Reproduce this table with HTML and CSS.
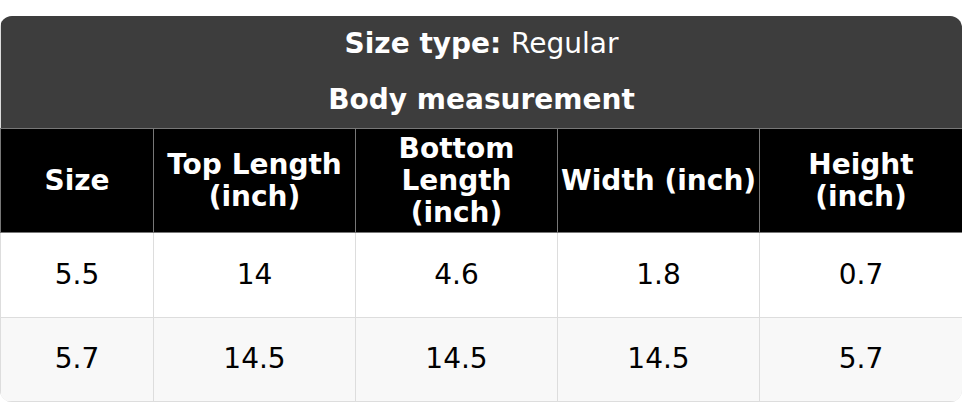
FILE: index.html
```html
<!DOCTYPE html>
<html>
<head>
<meta charset="utf-8">
<link rel="stylesheet" href="styles.css">
</head>
<body>
<div class="chart-wrap">
  <table class="chart">
    <colgroup>
      <col class="c-first">
      <col class="c-mid">
      <col class="c-mid">
      <col class="c-mid">
      <col class="c-last">
    </colgroup>
    <thead>
      <tr class="title-row">
        <th colspan="5"><b>Size type:</b> <span class="light">Regular</span></th>
      </tr>
      <tr class="title-row">
        <th colspan="5">Body measurement</th>
      </tr>
      <tr class="col-row">
        <th>Size</th>
        <th>Top Length (inch)</th>
        <th>Bottom Length (inch)</th>
        <th>Width (inch)</th>
        <th>Height (inch)</th>
      </tr>
    </thead>
    <tbody>
      <tr class="row-odd">
        <td>5.5</td><td>14</td><td>4.6</td><td>1.8</td><td>0.7</td>
      </tr>
      <tr class="row-even">
        <td>5.7</td><td>14.5</td><td>14.5</td><td>14.5</td><td>5.7</td>
      </tr>
    </tbody>
  </table>
</div>
</body>
</html>
```

FILE: styles.css
```css
html, body {
  margin: 0;
  padding: 0;
  background: #ffffff;
}

body {
  padding-top: 16px;
  font-family: "DejaVu Sans", sans-serif;
  font-size: 28px;
  line-height: 32px;
}

.chart-wrap {
  width: 962px;
  border-radius: 12px;
  overflow: hidden;
  box-shadow: inset 0 0 0 1px #dddddd;
}

.chart {
  width: 962px;
  border-collapse: collapse;
  table-layout: fixed;
}

.c-first { width: 153px; }
.c-mid { width: 202px; }
.c-last { width: 203px; }

.title-row th {
  background: #3d3d3d;
  color: #ffffff;
  font-weight: bold;
  height: 56px;
  padding: 0;
  text-align: center;
  border: none;
}

.title-row .light {
  font-weight: normal;
}

.col-row th {
  background: #000000;
  color: #ffffff;
  font-weight: bold;
  height: 103px;
  padding: 0 2px;
  text-align: center;
  border: 1px solid #777777;
}

tbody td {
  height: 83.5px;
  padding: 0;
  text-align: center;
  color: #000000;
  border: 1px solid #dddddd;
}

.row-odd td { background: #ffffff; }
.row-even td { background: #f8f8f8; }
```
